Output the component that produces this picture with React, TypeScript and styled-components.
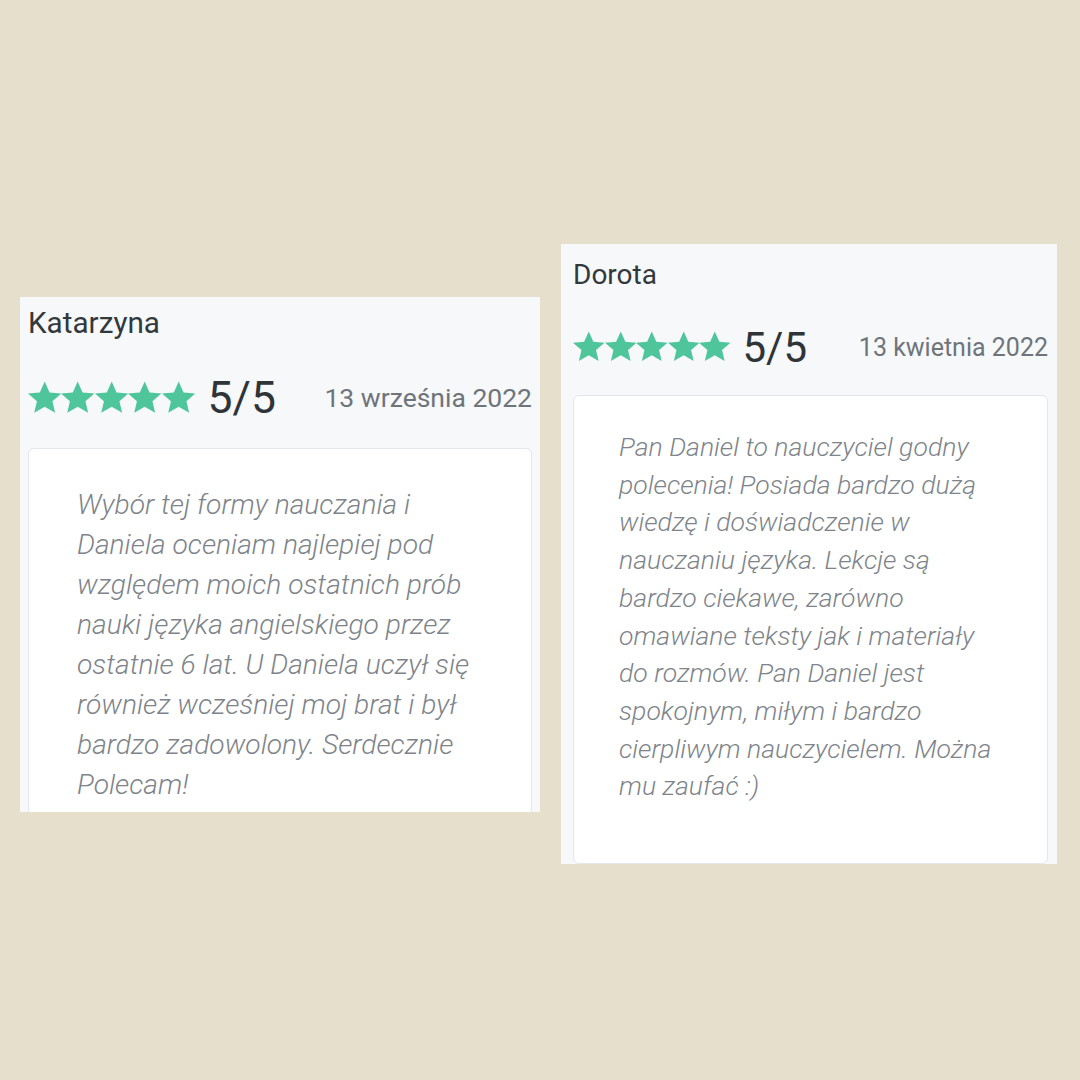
import React from "react";
import styled, { createGlobalStyle } from "styled-components";

interface Review {
  name: string;
  date: string;
  text: string[];
  width: number;
  height: number;
  padL: number;
  padR: number;
  s: number;
  nameTop: number;
  ratingGap: number;
  boxGap: number;
  textPad: number;
  textTop: number;
}

const reviews: Review[] = [
  {
    name: "Katarzyna",
    date: "13 września 2022",
    text: [
      "Wybór tej formy nauczania i",
      "Daniela oceniam najlepiej pod",
      "względem moich ostatnich prób",
      "nauki języka angielskiego przez",
      "ostatnie 6 lat. U Daniela uczył się",
      "również wcześniej moj brat i był",
      "bardzo zadowolony. Serdecznie",
      "Polecam!",
    ],
    width: 520,
    height: 515,
    padL: 8,
    padR: 8,
    s: 1.06,
    nameTop: 8,
    ratingGap: 34,
    boxGap: 27,
    textPad: 48,
    textTop: 36,
  },
  {
    name: "Dorota",
    date: "13 kwietnia 2022",
    text: [
      "Pan Daniel to nauczyciel godny",
      "polecenia! Posiada bardzo dużą",
      "wiedzę i doświadczenie w",
      "nauczaniu języka. Lekcje są",
      "bardzo ciekawe, zarówno",
      "omawiane teksty jak i materiały",
      "do rozmów. Pan Daniel jest",
      "spokojnym, miłym i bardzo",
      "cierpliwym nauczycielem. Można",
      "mu zaufać :)",
    ],
    width: 496,
    height: 620,
    padL: 12,
    padR: 9,
    s: 1,
    nameTop: 14,
    ratingGap: 33,
    boxGap: 26,
    textPad: 45,
    textTop: 32,
  },
];

const GlobalStyle = createGlobalStyle`
  body {
    margin: 0;
    background: #e6dfcc;
    font-family: Roboto, "Noto Sans", sans-serif;
  }
`;

const Page = styled.div`
  width: 1080px;
  height: 1080px;
  box-sizing: border-box;
  padding: 28px 0 0 20px;
  display: flex;
  align-items: center;
  gap: 21px;
`;

const Card = styled.div<{ $w: number; $h: number; $l: number; $r: number }>`
  width: ${(p) => p.$w}px;
  height: ${(p) => p.$h}px;
  box-sizing: border-box;
  padding: 0 ${(p) => p.$r}px 0 ${(p) => p.$l}px;
  background: #f6f8fa;
  overflow: hidden;
  display: flex;
  flex-direction: column;
`;

const Name = styled.div<{ $s: number; $top: number }>`
  margin-top: ${(p) => p.$top}px;
  font-size: ${(p) => 28 * p.$s}px;
  line-height: ${(p) => 34 * p.$s}px;
  color: #33383c;
`;

const RatingRow = styled.div<{ $s: number; $top: number }>`
  margin-top: ${(p) => p.$top}px;
  display: flex;
  align-items: center;
  height: ${(p) => 44 * p.$s}px;
`;

const Stars = styled.div<{ $s: number }>`
  display: flex;
  svg {
    width: ${(p) => 31.5 * p.$s}px;
    height: ${(p) => 31.5 * p.$s}px;
    fill: #4ec59b;
  }
`;

const Score = styled.span<{ $s: number }>`
  margin-left: ${(p) => 12 * p.$s}px;
  font-size: ${(p) => 42 * p.$s}px;
  color: #2f3438;
`;

const DateText = styled.span<{ $s: number }>`
  margin-left: auto;
  font-size: ${(p) => 25 * p.$s}px;
  color: #6f747a;
`;

const Box = styled.div<{ $top: number; $pad: number; $ptop: number }>`
  margin-top: ${(p) => p.$top}px;
  flex: 1 0 auto;
  background: #ffffff;
  border: 1px solid #e3e7ec;
  border-radius: 6px;
  padding: ${(p) => p.$ptop}px 10px 40px ${(p) => p.$pad}px;
`;

const Body = styled.p<{ $s: number }>`
  margin: 0;
  font-size: ${(p) => 26.6 * p.$s}px;
  line-height: ${(p) => 37.7 * p.$s}px;
  font-style: italic;
  font-weight: 300;
  color: #7e848a;
  white-space: nowrap;
`;

const Star: React.FC = () => (
  <svg viewBox="1 1 22 22">
    <path d="M12 1.3l3.2 7.2 7.8.7-5.9 5.1 1.8 7.7L12 18l-6.9 4 1.8-7.7-5.9-5.1 7.8-.7z" />
  </svg>
);

const ReviewCard: React.FC<{ r: Review }> = ({ r }) => (
  <Card $w={r.width} $h={r.height} $l={r.padL} $r={r.padR}>
    <Name $s={r.s} $top={r.nameTop}>
      {r.name}
    </Name>
    <RatingRow $s={r.s} $top={r.ratingGap}>
      <Stars $s={r.s}>
        {[0, 1, 2, 3, 4].map((i) => (
          <Star key={i} />
        ))}
      </Stars>
      <Score $s={r.s}>5/5</Score>
      <DateText $s={r.s}>{r.date}</DateText>
    </RatingRow>
    <Box $top={r.boxGap} $pad={r.textPad} $ptop={r.textTop}>
      <Body $s={r.s}>
        {r.text.map((line, i) => (
          <React.Fragment key={i}>
            {line}
            <br />
          </React.Fragment>
        ))}
      </Body>
    </Box>
  </Card>
);

const App: React.FC = () => (
  <>
    <GlobalStyle />
    <Page>
      {reviews.map((r) => (
        <ReviewCard key={r.name} r={r} />
      ))}
    </Page>
  </>
);

export default App;
